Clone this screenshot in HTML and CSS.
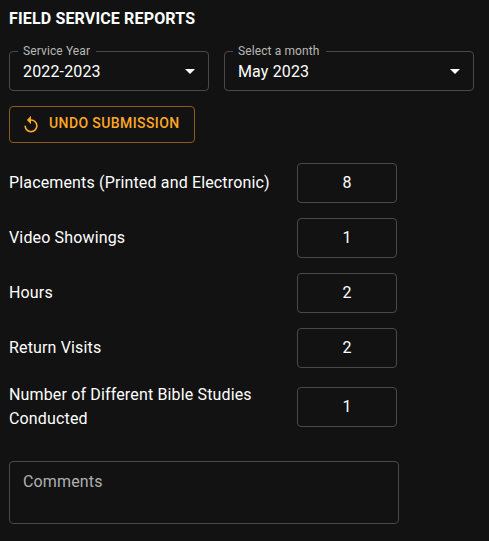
FILE: index.html
```html
<!DOCTYPE html>
<html lang="en">
<head>
<meta charset="utf-8">
<title>Field Service Reports</title>
<link rel="stylesheet" href="styles.css">
</head>
<body>
<main class="page">
  <h1 class="title">FIELD SERVICE REPORTS</h1>
  <div class="selects">
    <fieldset class="select year"><legend>Service Year</legend><div class="select-row"><span>2022-2023</span><svg class="arrow" viewBox="0 0 24 24"><path d="M7 10l5 5 5-5z"/></svg></div></fieldset>
    <fieldset class="select month"><legend>Select a month</legend><div class="select-row"><span>May 2023</span><svg class="arrow" viewBox="0 0 24 24"><path d="M7 10l5 5 5-5z"/></svg></div></fieldset>
  </div>
  <button class="undo"><svg viewBox="0 0 24 24"><path d="M12 5V1L7 6l5 5V7c3.31 0 6 2.690 6 6s-2.690 6-6 6-6-2.690-6-6H4c0 4.420 3.580 8 8 8s8-3.580 8-8-3.580-8-8-8z"/></svg><span>UNDO SUBMISSION</span></button>
  <div class="rows">
    <div class="row"><span class="label">Placements (Printed and Electronic)</span><span class="value">8</span></div>
    <div class="row"><span class="label">Video Showings</span><span class="value">1</span></div>
    <div class="row"><span class="label">Hours</span><span class="value">2</span></div>
    <div class="row"><span class="label">Return Visits</span><span class="value">2</span></div>
    <div class="row"><span class="label">Number of Different Bible Studies Conducted</span><span class="value">1</span></div>
  </div>
  <div class="comments">Comments</div>
</main>
</body>
</html>
```
FILE: styles.css
```css
* { box-sizing: border-box; }
body {
  margin: 0;
  background: #121212;
  color: #fff;
  font: 400 16px/24px Roboto, sans-serif;
}
.page { height: 541px; padding: 7px 9px 0; overflow: hidden; }
.title { margin: 0; font-size: 16px; line-height: 24px; font-weight: 700; letter-spacing: .15px; }
.selects { display: flex; gap: 15px; margin-top: 13px; }
.select {
  height: 47px;
  min-width: 0;
  margin: 0;
  padding: 0 6px 0 8px;
  border: 1px solid #494949;
  border-radius: 4px;
}
.select legend {
  height: 14px;
  padding: 0 6px 0 5px;
  font-size: 12px;
  line-height: 14px;
  letter-spacing: .11px;
  color: #b8b8b8;
}
.year { width: 200px; }
.month { width: 250px; }
.select-row { display: flex; justify-content: space-between; padding: 1px 0 0 5px; letter-spacing: .15px; }
.select-row span { padding-top: 1px; line-height: 24px; }
.arrow { width: 24px; height: 24px; fill: #fff; }
.undo {
  display: flex;
  align-items: center;
  gap: 8px;
  width: 186px;
  height: 37px;
  margin: 15px 0 0;
  padding: 0 11px;
  border: 1px solid #8c5a1a;
  border-radius: 4px;
  background: none;
  color: #ffa726;
  font: 500 14px/24px Roboto, sans-serif;
  letter-spacing: .4px;
  white-space: nowrap;
}
.undo span { padding-bottom: 4px; }
.undo svg { width: 20px; height: 20px; fill: currentColor; }
.rows { display: flex; flex-direction: column; gap: 15px; margin-top: 20px; }
.row { display: flex; align-items: center; gap: 18px; min-height: 40px; }
.label { width: 270px; letter-spacing: .15px; }
.value {
  width: 100px;
  height: 40px;
  border: 1px solid #494949;
  border-radius: 4px;
  line-height: 38px;
  text-align: center;
}
.comments {
  width: 390px;
  height: 63px;
  margin-top: 30px;
  padding: 8px 13px;
  border: 1px solid #494949;
  border-radius: 4px;
  color: #b0b0b0;
  letter-spacing: .15px;
}
```
